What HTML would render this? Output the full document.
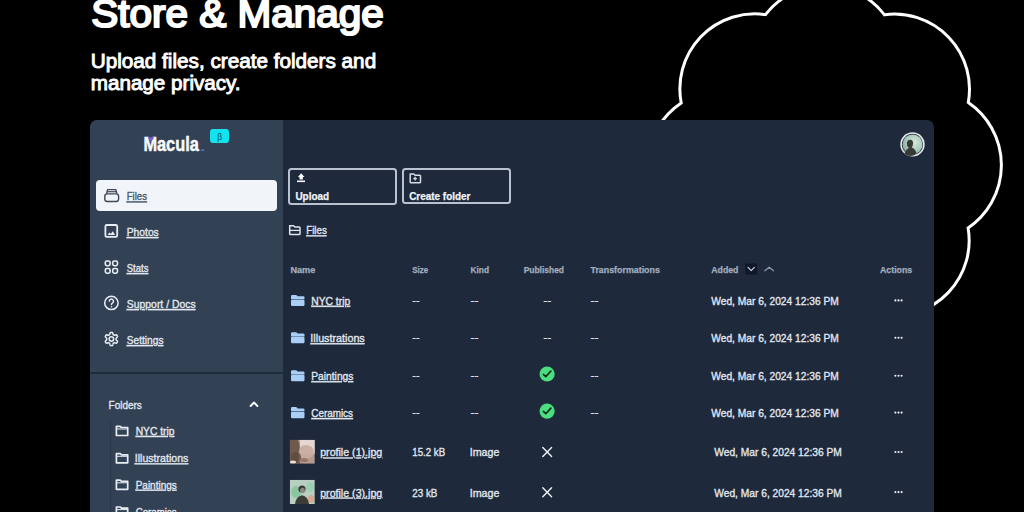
<!DOCTYPE html>
<html>
<head>
<meta charset="utf-8">
<style>
html,body{margin:0;padding:0;}
body{width:1024px;height:512px;background:#000;overflow:hidden;position:relative;font-family:"Liberation Sans",sans-serif;}
.abs{position:absolute;}
#cloud{position:absolute;left:0;top:0;}
#panel{position:absolute;left:90px;top:120px;width:844px;height:420px;border-radius:7px;background:#1e293b;overflow:hidden;}
#side{position:absolute;left:0;top:0;width:193px;height:420px;background:#334155;}
#divider{position:absolute;left:0;top:251.5px;width:193px;height:2px;background:#1f2a3b;}
#active{position:absolute;left:6px;top:60px;width:181px;height:31px;border-radius:4px;background:#f1f5f9;}
#beta{position:absolute;left:120.2px;top:9.3px;width:18.6px;height:13.8px;border-radius:3px;background:#12e3ef;}
.btn{position:absolute;border:2px solid #b9c3d0;border-radius:3.5px;box-sizing:border-box;}
#up{left:198px;top:47.8px;width:109.2px;height:37px;}
#cf{left:312.4px;top:48.2px;width:108.4px;height:36.3px;}
#tree{position:absolute;left:19.5px;top:300px;width:1px;height:120px;background:#2c394b;}
#overlay{position:absolute;left:0;top:0;}
text{font-family:"Liberation Sans",sans-serif;text-decoration-skip-ink:none;}
</style>
</head>
<body>
<svg id="cloud" width="1024" height="512" viewBox="0 0 1024 512">
<path d="M681.4 228 A75 75 0 0 1 681.2 102.9 A75 75 0 0 1 765.5 14.6 A75 75 0 0 1 884.5 14.8 A75 75 0 0 1 968.3 102.4 A76 76 0 0 1 968.1 228 A75 75 0 0 1 884.5 315" fill="none" stroke="#fff" stroke-width="3" stroke-linejoin="miter"/>
</svg>
<div id="panel">
  <div id="side">
    <div id="beta"></div>
    <div id="active"></div>
    <div id="divider"></div>
    <div id="tree"></div>
  </div>
  <div class="btn" id="up"></div>
  <div class="btn" id="cf"></div>
</div>
<svg id="overlay" width="1024" height="512" viewBox="0 0 1024 512">
<text x="91.26" y="27.10" font-size="39" font-weight="400" fill="#ffffff" stroke="#ffffff" stroke-width="2.1" textLength="292.59" lengthAdjust="spacingAndGlyphs">Store &amp; Manage</text>
<text x="90.76" y="68.10" font-size="20" font-weight="400" fill="#ffffff" stroke="#ffffff" stroke-width="0.9" textLength="285.40" lengthAdjust="spacingAndGlyphs">Upload files, create folders and</text>
<text x="90.77" y="90.20" font-size="20" font-weight="400" fill="#ffffff" stroke="#ffffff" stroke-width="0.9" textLength="149.84" lengthAdjust="spacingAndGlyphs">manage privacy.</text>
<text x="143.38" y="151.20" font-size="20" font-weight="700" fill="#f8fafc" stroke="#f8fafc" stroke-width="0.5" textLength="55.40" lengthAdjust="spacingAndGlyphs">Macula</text>
<text x="126.70" y="200.30" font-size="11.5" font-weight="400" fill="#475569" stroke="#475569" stroke-width="0.35" textLength="20.29" lengthAdjust="spacingAndGlyphs" text-decoration="underline">Files</text>
<text x="126.70" y="236.00" font-size="11.5" font-weight="400" fill="#e2e8f0" stroke="#e2e8f0" stroke-width="0.35" textLength="32.08" lengthAdjust="spacingAndGlyphs" text-decoration="underline">Photos</text>
<text x="126.80" y="272.00" font-size="11.5" font-weight="400" fill="#e2e8f0" stroke="#e2e8f0" stroke-width="0.35" textLength="21.59" lengthAdjust="spacingAndGlyphs" text-decoration="underline">Stats</text>
<text x="126.80" y="308.00" font-size="11.5" font-weight="400" fill="#e2e8f0" stroke="#e2e8f0" stroke-width="0.35" textLength="68.87" lengthAdjust="spacingAndGlyphs" text-decoration="underline">Support / Docs</text>
<text x="126.80" y="344.00" font-size="11.5" font-weight="400" fill="#e2e8f0" stroke="#e2e8f0" stroke-width="0.35" textLength="36.68" lengthAdjust="spacingAndGlyphs" text-decoration="underline">Settings</text>
<text x="108.60" y="408.60" font-size="11.5" font-weight="400" fill="#e2e8f0" stroke="#e2e8f0" stroke-width="0.35" textLength="33.18" lengthAdjust="spacingAndGlyphs">Folders</text>
<text x="135.70" y="434.90" font-size="11.5" font-weight="400" fill="#e2e8f0" stroke="#e2e8f0" stroke-width="0.35" textLength="38.85" lengthAdjust="spacingAndGlyphs" text-decoration="underline">NYC trip</text>
<text x="134.78" y="462.20" font-size="11.5" font-weight="400" fill="#e2e8f0" stroke="#e2e8f0" stroke-width="0.35" textLength="53.59" lengthAdjust="spacingAndGlyphs" text-decoration="underline">Illustrations</text>
<text x="135.70" y="488.70" font-size="11.5" font-weight="400" fill="#e2e8f0" stroke="#e2e8f0" stroke-width="0.35" textLength="41.08" lengthAdjust="spacingAndGlyphs" text-decoration="underline">Paintings</text>
<text x="135.70" y="515.50" font-size="11.5" font-weight="400" fill="#e2e8f0" stroke="#e2e8f0" stroke-width="0.35" textLength="40.79" lengthAdjust="spacingAndGlyphs" text-decoration="underline">Ceramics</text>
<text x="295.40" y="199.80" font-size="11.5" font-weight="700" fill="#f1f5f9" stroke="#f1f5f9" stroke-width="0.25" textLength="33.72" lengthAdjust="spacingAndGlyphs">Upload</text>
<text x="409.20" y="199.60" font-size="11.5" font-weight="700" fill="#f1f5f9" stroke="#f1f5f9" stroke-width="0.25" textLength="61.25" lengthAdjust="spacingAndGlyphs">Create folder</text>
<text x="306.20" y="234.20" font-size="11.5" font-weight="400" fill="#e2e8f0" stroke="#e2e8f0" stroke-width="0.35" textLength="20.59" lengthAdjust="spacingAndGlyphs" text-decoration="underline">Files</text>
<text x="290.40" y="273.00" font-size="9.3" font-weight="700" fill="#a3aebe" stroke="#a3aebe" stroke-width="0.25" textLength="24.97" lengthAdjust="spacingAndGlyphs">Name</text>
<text x="412.30" y="273.00" font-size="9.3" font-weight="700" fill="#a3aebe" stroke="#a3aebe" stroke-width="0.25" textLength="15.85" lengthAdjust="spacingAndGlyphs">Size</text>
<text x="470.50" y="273.00" font-size="9.3" font-weight="700" fill="#a3aebe" stroke="#a3aebe" stroke-width="0.25" textLength="18.51" lengthAdjust="spacingAndGlyphs">Kind</text>
<text x="523.70" y="273.00" font-size="9.3" font-weight="700" fill="#a3aebe" stroke="#a3aebe" stroke-width="0.25" textLength="40.31" lengthAdjust="spacingAndGlyphs">Published</text>
<text x="590.50" y="273.00" font-size="9.3" font-weight="700" fill="#a3aebe" stroke="#a3aebe" stroke-width="0.25" textLength="69.36" lengthAdjust="spacingAndGlyphs">Transformations</text>
<text x="711.25" y="273.00" font-size="9.3" font-weight="700" fill="#a3aebe" stroke="#a3aebe" stroke-width="0.25" textLength="27.20" lengthAdjust="spacingAndGlyphs">Added</text>
<text x="880.00" y="273.00" font-size="9.3" font-weight="700" fill="#a3aebe" stroke="#a3aebe" stroke-width="0.25" textLength="32.16" lengthAdjust="spacingAndGlyphs">Actions</text>
<text x="311.30" y="304.80" font-size="11.5" font-weight="400" fill="#e2e8f0" stroke="#e2e8f0" stroke-width="0.35" textLength="38.85" lengthAdjust="spacingAndGlyphs" text-decoration="underline">NYC trip</text>
<text x="412.30" y="303.80" font-size="11.5" font-weight="400" fill="#e2e8f0" stroke="#e2e8f0" stroke-width="0.15" textLength="7.24" lengthAdjust="spacingAndGlyphs">--</text>
<text x="470.50" y="303.80" font-size="11.5" font-weight="400" fill="#e2e8f0" stroke="#e2e8f0" stroke-width="0.15" textLength="8.02" lengthAdjust="spacingAndGlyphs">--</text>
<text x="590.50" y="303.80" font-size="11.5" font-weight="400" fill="#e2e8f0" stroke="#e2e8f0" stroke-width="0.15" textLength="8.02" lengthAdjust="spacingAndGlyphs">--</text>
<text x="711.25" y="304.80" font-size="11.5" font-weight="400" fill="#e2e8f0" stroke="#e2e8f0" stroke-width="0.35" textLength="127.51" lengthAdjust="spacingAndGlyphs">Wed, Mar 6, 2024 12:36 PM</text>
<text x="310.36" y="342.10" font-size="11.5" font-weight="400" fill="#e2e8f0" stroke="#e2e8f0" stroke-width="0.35" textLength="54.40" lengthAdjust="spacingAndGlyphs" text-decoration="underline">Illustrations</text>
<text x="412.30" y="341.10" font-size="11.5" font-weight="400" fill="#e2e8f0" stroke="#e2e8f0" stroke-width="0.15" textLength="7.24" lengthAdjust="spacingAndGlyphs">--</text>
<text x="470.50" y="341.10" font-size="11.5" font-weight="400" fill="#e2e8f0" stroke="#e2e8f0" stroke-width="0.15" textLength="8.02" lengthAdjust="spacingAndGlyphs">--</text>
<text x="590.50" y="341.10" font-size="11.5" font-weight="400" fill="#e2e8f0" stroke="#e2e8f0" stroke-width="0.15" textLength="8.02" lengthAdjust="spacingAndGlyphs">--</text>
<text x="711.25" y="342.10" font-size="11.5" font-weight="400" fill="#e2e8f0" stroke="#e2e8f0" stroke-width="0.35" textLength="127.51" lengthAdjust="spacingAndGlyphs">Wed, Mar 6, 2024 12:36 PM</text>
<text x="311.30" y="380.10" font-size="11.5" font-weight="400" fill="#e2e8f0" stroke="#e2e8f0" stroke-width="0.35" textLength="42.08" lengthAdjust="spacingAndGlyphs" text-decoration="underline">Paintings</text>
<text x="412.30" y="379.10" font-size="11.5" font-weight="400" fill="#e2e8f0" stroke="#e2e8f0" stroke-width="0.15" textLength="7.24" lengthAdjust="spacingAndGlyphs">--</text>
<text x="470.50" y="379.10" font-size="11.5" font-weight="400" fill="#e2e8f0" stroke="#e2e8f0" stroke-width="0.15" textLength="8.02" lengthAdjust="spacingAndGlyphs">--</text>
<text x="590.50" y="379.10" font-size="11.5" font-weight="400" fill="#e2e8f0" stroke="#e2e8f0" stroke-width="0.15" textLength="8.02" lengthAdjust="spacingAndGlyphs">--</text>
<text x="711.25" y="380.10" font-size="11.5" font-weight="400" fill="#e2e8f0" stroke="#e2e8f0" stroke-width="0.35" textLength="127.51" lengthAdjust="spacingAndGlyphs">Wed, Mar 6, 2024 12:36 PM</text>
<text x="311.30" y="417.00" font-size="11.5" font-weight="400" fill="#e2e8f0" stroke="#e2e8f0" stroke-width="0.35" textLength="41.69" lengthAdjust="spacingAndGlyphs" text-decoration="underline">Ceramics</text>
<text x="412.30" y="416.00" font-size="11.5" font-weight="400" fill="#e2e8f0" stroke="#e2e8f0" stroke-width="0.15" textLength="7.24" lengthAdjust="spacingAndGlyphs">--</text>
<text x="470.50" y="416.00" font-size="11.5" font-weight="400" fill="#e2e8f0" stroke="#e2e8f0" stroke-width="0.15" textLength="8.02" lengthAdjust="spacingAndGlyphs">--</text>
<text x="590.50" y="416.00" font-size="11.5" font-weight="400" fill="#e2e8f0" stroke="#e2e8f0" stroke-width="0.15" textLength="8.02" lengthAdjust="spacingAndGlyphs">--</text>
<text x="711.25" y="417.00" font-size="11.5" font-weight="400" fill="#e2e8f0" stroke="#e2e8f0" stroke-width="0.35" textLength="127.51" lengthAdjust="spacingAndGlyphs">Wed, Mar 6, 2024 12:36 PM</text>
<text x="543.20" y="303.80" font-size="11.5" font-weight="400" fill="#e2e8f0" stroke="#e2e8f0" stroke-width="0.15" textLength="8.02" lengthAdjust="spacingAndGlyphs">--</text>
<text x="543.20" y="341.10" font-size="11.5" font-weight="400" fill="#e2e8f0" stroke="#e2e8f0" stroke-width="0.15" textLength="8.02" lengthAdjust="spacingAndGlyphs">--</text>
<text x="320.20" y="456.40" font-size="11.5" font-weight="400" fill="#e2e8f0" stroke="#e2e8f0" stroke-width="0.35" textLength="62.07" lengthAdjust="spacingAndGlyphs" text-decoration="underline">profile (1).jpg</text>
<text x="412.30" y="456.40" font-size="11.5" font-weight="400" fill="#e2e8f0" stroke="#e2e8f0" stroke-width="0.35" textLength="32.82" lengthAdjust="spacingAndGlyphs">15.2 kB</text>
<text x="469.67" y="456.40" font-size="11.5" font-weight="400" fill="#e2e8f0" stroke="#e2e8f0" stroke-width="0.35" textLength="29.70" lengthAdjust="spacingAndGlyphs">Image</text>
<text x="714.30" y="456.40" font-size="11.5" font-weight="400" fill="#e2e8f0" stroke="#e2e8f0" stroke-width="0.35" textLength="127.51" lengthAdjust="spacingAndGlyphs">Wed, Mar 6, 2024 12:36 PM</text>
<text x="320.20" y="496.50" font-size="11.5" font-weight="400" fill="#e2e8f0" stroke="#e2e8f0" stroke-width="0.35" textLength="62.07" lengthAdjust="spacingAndGlyphs" text-decoration="underline">profile (3).jpg</text>
<text x="412.30" y="496.50" font-size="11.5" font-weight="400" fill="#e2e8f0" stroke="#e2e8f0" stroke-width="0.35" textLength="25.12" lengthAdjust="spacingAndGlyphs">23 kB</text>
<text x="469.67" y="496.50" font-size="11.5" font-weight="400" fill="#e2e8f0" stroke="#e2e8f0" stroke-width="0.35" textLength="29.70" lengthAdjust="spacingAndGlyphs">Image</text>
<text x="714.30" y="496.50" font-size="11.5" font-weight="400" fill="#e2e8f0" stroke="#e2e8f0" stroke-width="0.35" textLength="127.51" lengthAdjust="spacingAndGlyphs">Wed, Mar 6, 2024 12:36 PM</text>
<defs>
<linearGradient id="th1" x1="0" y1="0" x2="1" y2="0.3"><stop offset="0" stop-color="#6e5a4e"/><stop offset="0.45" stop-color="#8f7566"/><stop offset="0.75" stop-color="#c9aaa0"/><stop offset="1" stop-color="#e3d6d0"/></linearGradient>
<radialGradient id="th2" cx="0.45" cy="0.6" r="0.7"><stop offset="0" stop-color="#3e3c3a"/><stop offset="0.45" stop-color="#5b6356"/><stop offset="0.7" stop-color="#9fc4a6"/><stop offset="1" stop-color="#d4dcd6"/></radialGradient>
<radialGradient id="av" cx="0.6" cy="0.4" r="0.7"><stop offset="0" stop-color="#d6e6dc"/><stop offset="0.6" stop-color="#a9c9b9"/><stop offset="1" stop-color="#7c9a8c"/></radialGradient>
</defs>
<text x="219.6" y="139.8" font-size="8.5" fill="#0d4f5a" text-anchor="middle" font-family="Liberation Sans">β</text>
<path d="M148.1 136.3 L150.9 137.6 L153.8 136.3 L153.6 138.6 L150.9 141.8 L148.3 138.6 Z" fill="#6b62d6"/>
<rect x="200.8" y="149.5" width="3.4" height="1.4" fill="#5b6fd6"/>
<circle cx="912.5" cy="144.4" r="12.2" fill="#e3e9ef"/>
<circle cx="912.5" cy="144.4" r="10.6" fill="#27303a"/>
<circle cx="912.5" cy="144.4" r="10.0" fill="url(#av)"/>
<path d="M904.5 153.5 q1.5-4.5 4.5-5.5 q-2.5-1.5-2.2-4.8 q0.6-3.6 3.8-3.4 q3 0.6 2.4 4.4 q-0.4 2.3-1.4 3.3 q3.5 1.2 5 6 q-3 2.6-6.5 2.6 q-3.5 0-5.6-2.6 z" fill="#363b36"/>
<rect x="104.8" y="193.9" width="13.8" height="7.6" rx="2.4" fill="none" stroke="#3d4857" stroke-width="1.4"/>
<path d="M106.6 193.6 L107.6 189.6 H115.8 L116.9 193.6" fill="none" stroke="#3d4857" stroke-width="1.4" stroke-linejoin="round"/>
<path d="M107.2 191.7 H116.2" stroke="#3d4857" stroke-width="1.2"/>
<rect x="105.4" y="225" width="11.8" height="11.8" rx="1.4" fill="none" stroke="#e8edf3" stroke-width="1.8"/>
<path d="M107.6 235 L109.3 232.4 L110.8 233.8 L112.8 231.3 L115.1 235 Z" fill="#e8edf3"/>
<rect x="105.3" y="261" width="4.8" height="4.7" rx="1.6" fill="none" stroke="#e8edf3" stroke-width="1.6"/>
<rect x="112.7" y="261" width="4.8" height="4.7" rx="1.6" fill="none" stroke="#e8edf3" stroke-width="1.6"/>
<rect x="105.3" y="268.5" width="4.8" height="4.7" rx="1.6" fill="none" stroke="#e8edf3" stroke-width="1.6"/>
<rect x="112.7" y="268.5" width="4.8" height="4.7" rx="1.6" fill="none" stroke="#e8edf3" stroke-width="1.6"/>
<circle cx="111.4" cy="302.9" r="6.7" fill="none" stroke="#e8edf3" stroke-width="1.5"/>
<path d="M109.3 301.1 a2.1 2.1 0 1 1 3.3 1.8 c-0.8 0.5-1.1 0.9-1.1 1.7" fill="none" stroke="#e8edf3" stroke-width="1.4" stroke-linecap="round"/>
<circle cx="111.5" cy="306.8" r="0.8" fill="#e8edf3"/>
<path d="M116.10 339.00 L116.10 339.12 L116.09 339.25 L116.09 339.37 L116.07 339.49 L116.06 339.61 L116.04 339.74 L116.23 339.90 L116.44 340.07 L116.65 340.26 L116.86 340.46 L117.06 340.68 L117.25 340.90 L117.42 341.13 L117.56 341.36 L117.50 341.53 L117.43 341.68 L117.36 341.84 L117.28 342.00 L117.20 342.15 L117.12 342.30 L117.03 342.45 L116.94 342.59 L116.84 342.74 L116.74 342.88 L116.64 343.02 L116.53 343.15 L116.25 343.15 L115.97 343.11 L115.68 343.06 L115.40 343.00 L115.12 342.92 L114.85 342.83 L114.59 342.74 L114.36 342.65 L114.26 342.73 L114.16 342.80 L114.06 342.87 L113.96 342.94 L113.86 343.01 L113.75 343.07 L113.64 343.13 L113.53 343.19 L113.42 343.24 L113.31 343.29 L113.20 343.34 L113.08 343.39 L113.04 343.63 L112.99 343.90 L112.93 344.18 L112.86 344.46 L112.78 344.74 L112.68 345.01 L112.56 345.28 L112.43 345.52 L112.26 345.54 L112.09 345.56 L111.92 345.58 L111.75 345.59 L111.57 345.60 L111.40 345.60 L111.23 345.60 L111.05 345.59 L110.88 345.58 L110.71 345.56 L110.54 345.54 L110.37 345.52 L110.24 345.28 L110.12 345.01 L110.02 344.74 L109.94 344.46 L109.87 344.18 L109.81 343.90 L109.76 343.63 L109.72 343.39 L109.60 343.34 L109.49 343.29 L109.38 343.24 L109.27 343.19 L109.16 343.13 L109.05 343.07 L108.94 343.01 L108.84 342.94 L108.74 342.87 L108.64 342.80 L108.54 342.73 L108.44 342.65 L108.21 342.74 L107.95 342.83 L107.68 342.92 L107.40 343.00 L107.12 343.06 L106.83 343.11 L106.55 343.15 L106.27 343.15 L106.16 343.02 L106.06 342.88 L105.96 342.74 L105.86 342.59 L105.77 342.45 L105.68 342.30 L105.60 342.15 L105.52 342.00 L105.44 341.84 L105.37 341.68 L105.30 341.53 L105.24 341.36 L105.38 341.13 L105.55 340.90 L105.74 340.68 L105.94 340.46 L106.15 340.26 L106.36 340.07 L106.57 339.90 L106.76 339.74 L106.74 339.61 L106.73 339.49 L106.71 339.37 L106.71 339.25 L106.70 339.12 L106.70 339.00 L106.70 338.88 L106.71 338.75 L106.71 338.63 L106.73 338.51 L106.74 338.39 L106.76 338.26 L106.57 338.10 L106.36 337.93 L106.15 337.74 L105.94 337.54 L105.74 337.32 L105.55 337.10 L105.38 336.87 L105.24 336.64 L105.30 336.47 L105.37 336.32 L105.44 336.16 L105.52 336.00 L105.60 335.85 L105.68 335.70 L105.77 335.55 L105.86 335.41 L105.96 335.26 L106.06 335.12 L106.16 334.98 L106.27 334.85 L106.55 334.85 L106.83 334.89 L107.12 334.94 L107.40 335.00 L107.68 335.08 L107.95 335.17 L108.21 335.26 L108.44 335.35 L108.54 335.27 L108.64 335.20 L108.74 335.13 L108.84 335.06 L108.94 334.99 L109.05 334.93 L109.16 334.87 L109.27 334.81 L109.38 334.76 L109.49 334.71 L109.60 334.66 L109.72 334.61 L109.76 334.37 L109.81 334.10 L109.87 333.82 L109.94 333.54 L110.02 333.26 L110.12 332.99 L110.24 332.72 L110.37 332.48 L110.54 332.46 L110.71 332.44 L110.88 332.42 L111.05 332.41 L111.23 332.40 L111.40 332.40 L111.57 332.40 L111.75 332.41 L111.92 332.42 L112.09 332.44 L112.26 332.46 L112.43 332.48 L112.56 332.72 L112.68 332.99 L112.78 333.26 L112.86 333.54 L112.93 333.82 L112.99 334.10 L113.04 334.37 L113.08 334.61 L113.20 334.66 L113.31 334.71 L113.42 334.76 L113.53 334.81 L113.64 334.87 L113.75 334.93 L113.86 334.99 L113.96 335.06 L114.06 335.13 L114.16 335.20 L114.26 335.27 L114.36 335.35 L114.59 335.26 L114.85 335.17 L115.12 335.08 L115.40 335.00 L115.68 334.94 L115.97 334.89 L116.25 334.85 L116.53 334.85 L116.64 334.98 L116.74 335.12 L116.84 335.26 L116.94 335.41 L117.03 335.55 L117.12 335.70 L117.20 335.85 L117.28 336.00 L117.36 336.16 L117.43 336.32 L117.50 336.47 L117.56 336.64 L117.42 336.87 L117.25 337.10 L117.06 337.32 L116.86 337.54 L116.65 337.74 L116.44 337.93 L116.23 338.10 L116.04 338.26 L116.06 338.39 L116.07 338.51 L116.09 338.63 L116.09 338.75 L116.10 338.88 Z" fill="none" stroke="#e8edf3" stroke-width="1.5" stroke-linejoin="round"/>
<circle cx="111.4" cy="339.0" r="2.2" fill="none" stroke="#e8edf3" stroke-width="1.5"/>
<path d="M250.6 406 L254 402.5 L257.4 406" fill="none" stroke="#f8fafc" stroke-width="1.9" stroke-linecap="round" stroke-linejoin="round"/>
<path d="M116.4 426.4 h3.8 l1.3 1.1 h6.2 v8.0 h-11.3 z" fill="none" stroke="#e8edf3" stroke-width="1.7" stroke-linejoin="round"/>
<path d="M116.4 429.0 h11.3" stroke="#e8edf3" stroke-width="1.0"/>
<path d="M116.4 453.7 h3.8 l1.3 1.1 h6.2 v8.0 h-11.3 z" fill="none" stroke="#e8edf3" stroke-width="1.7" stroke-linejoin="round"/>
<path d="M116.4 456.3 h11.3" stroke="#e8edf3" stroke-width="1.0"/>
<path d="M116.4 480.2 h3.8 l1.3 1.1 h6.2 v8.0 h-11.3 z" fill="none" stroke="#e8edf3" stroke-width="1.7" stroke-linejoin="round"/>
<path d="M116.4 482.8 h11.3" stroke="#e8edf3" stroke-width="1.0"/>
<path d="M116.4 507.0 h3.8 l1.3 1.1 h6.2 v8.0 h-11.3 z" fill="none" stroke="#e8edf3" stroke-width="1.7" stroke-linejoin="round"/>
<path d="M116.4 509.6 h11.3" stroke="#e8edf3" stroke-width="1.0"/>
<path d="M301.2 173.3 L304.5 177 L302.9 177 L302.9 179.5 L299.5 179.5 L299.5 177 L297.9 177 Z" fill="#f8fafc"/>
<rect x="297" y="180.5" width="8" height="1.6" fill="#f8fafc"/>
<path d="M410.2 174 h3.6 l1.3 1.2 h4.6 q0.8 0 0.8 0.8 v5.9 q0 0.8-0.8 0.8 h-8.7 q-0.8 0-0.8-0.8 z" fill="none" stroke="#d5dce6" stroke-width="1.5" stroke-linejoin="round"/>
<path d="M413.3 178.6 h3.6 M415.1 176.8 v3.6" stroke="#d5dce6" stroke-width="1.3"/>
<path d="M289.7 225.8 h3.9 l1.3 1.2 h4.3 q0.8 0 0.8 0.8 v5.9 q0 0.8-0.8 0.8 h-8.7 q-0.8 0-0.8-0.8 z" fill="none" stroke="#dfe5ec" stroke-width="1.5" stroke-linejoin="round"/>
<path d="M290 230.4 h9.7" stroke="#dfe5ec" stroke-width="1.3"/>
<path d="M291 296.1 q0-1.2 1.2-1.2 h4 l1.5 1.4 h5.6 q1.2 0 1.2 1.2 v1.6 h-13.5 z" fill="#a9cff7"/>
<rect x="291" y="299.5" width="13.5" height="6.5" rx="1.3" fill="#a9cff7"/>
<path d="M291 333.4 q0-1.2 1.2-1.2 h4 l1.5 1.4 h5.6 q1.2 0 1.2 1.2 v1.6 h-13.5 z" fill="#a9cff7"/>
<rect x="291" y="336.8" width="13.5" height="6.5" rx="1.3" fill="#a9cff7"/>
<path d="M291 371.4 q0-1.2 1.2-1.2 h4 l1.5 1.4 h5.6 q1.2 0 1.2 1.2 v1.6 h-13.5 z" fill="#a9cff7"/>
<rect x="291" y="374.8" width="13.5" height="6.5" rx="1.3" fill="#a9cff7"/>
<path d="M291 408.3 q0-1.2 1.2-1.2 h4 l1.5 1.4 h5.6 q1.2 0 1.2 1.2 v1.6 h-13.5 z" fill="#a9cff7"/>
<rect x="291" y="411.7" width="13.5" height="6.5" rx="1.3" fill="#a9cff7"/>
<circle cx="547.1" cy="374.0" r="7.6" fill="#4ade80"/>
<path d="M543.4 374.3 L545.8 376.6 L550.9 371.0" fill="none" stroke="#0d2a17" stroke-width="1.6" stroke-linecap="round" stroke-linejoin="round"/>
<circle cx="547.1" cy="411.1" r="7.6" fill="#4ade80"/>
<path d="M543.4 411.4 L545.8 413.7 L550.9 408.1" fill="none" stroke="#0d2a17" stroke-width="1.6" stroke-linecap="round" stroke-linejoin="round"/>
<path d="M542.8 447.6 L551.6 456.6 M551.6 447.6 L542.8 456.6" stroke="#eef2f6" stroke-width="1.4" stroke-linecap="round"/>
<path d="M542.8 487.8 L551.6 496.8 M551.6 487.8 L542.8 496.8" stroke="#eef2f6" stroke-width="1.4" stroke-linecap="round"/>
<rect x="745.2" y="263.6" width="11.8" height="10.9" rx="0.8" fill="#0f172a"/>
<path d="M748.1 267.4 L751.2 270.6 L754.3 267.4" fill="none" stroke="#c3ccd8" stroke-width="1.3" stroke-linecap="round" stroke-linejoin="round"/>
<path d="M764.8 270.7 L769.2 267.2 L773.6 270.7" fill="none" stroke="#8d99aa" stroke-width="1.3" stroke-linecap="round" stroke-linejoin="round"/>
<circle cx="895.4" cy="300.4" r="1.05" fill="#f1f5f9"/>
<circle cx="898.5" cy="300.4" r="1.05" fill="#f1f5f9"/>
<circle cx="901.6" cy="300.4" r="1.05" fill="#f1f5f9"/>
<circle cx="895.4" cy="337.7" r="1.05" fill="#f1f5f9"/>
<circle cx="898.5" cy="337.7" r="1.05" fill="#f1f5f9"/>
<circle cx="901.6" cy="337.7" r="1.05" fill="#f1f5f9"/>
<circle cx="895.4" cy="375.7" r="1.05" fill="#f1f5f9"/>
<circle cx="898.5" cy="375.7" r="1.05" fill="#f1f5f9"/>
<circle cx="901.6" cy="375.7" r="1.05" fill="#f1f5f9"/>
<circle cx="895.4" cy="412.6" r="1.05" fill="#f1f5f9"/>
<circle cx="898.5" cy="412.6" r="1.05" fill="#f1f5f9"/>
<circle cx="901.6" cy="412.6" r="1.05" fill="#f1f5f9"/>
<circle cx="895.4" cy="452.0" r="1.05" fill="#f1f5f9"/>
<circle cx="898.5" cy="452.0" r="1.05" fill="#f1f5f9"/>
<circle cx="901.6" cy="452.0" r="1.05" fill="#f1f5f9"/>
<circle cx="895.4" cy="492.1" r="1.05" fill="#f1f5f9"/>
<circle cx="898.5" cy="492.1" r="1.05" fill="#f1f5f9"/>
<circle cx="901.6" cy="492.1" r="1.05" fill="#f1f5f9"/>
<clipPath id="c1"><rect x="289.8" y="439.8" width="25" height="24"/></clipPath>
<clipPath id="c2"><rect x="289.8" y="479.8" width="25" height="24.3"/></clipPath>
<filter id="bl" x="-10%" y="-10%" width="120%" height="120%"><feGaussianBlur stdDeviation="0.7"/></filter>
<g clip-path="url(#c1)"><g filter="url(#bl)"><rect x="289.8" y="439.8" width="25" height="24" fill="#b59a8f"/><rect x="300" y="439.8" width="15" height="14" fill="#e4d6d1"/><ellipse cx="306" cy="452" rx="8" ry="7" fill="#c8aba0" opacity="0.9"/><path d="M289.8 439.8 h8 q3 6 1 12 q-2 6 2 12 h-11 z" fill="#6f5a4e"/><ellipse cx="296" cy="457" rx="5" ry="5" fill="#5e4a40" opacity="0.8"/><ellipse cx="293" cy="462" rx="3" ry="1.5" fill="#e9e2dc"/><ellipse cx="304" cy="460" rx="4" ry="2" fill="#8e6e62" opacity="0.8"/></g></g>
<g clip-path="url(#c2)"><g filter="url(#bl)"><rect x="289.8" y="479.8" width="25" height="24.3" fill="#b9cfc2"/><ellipse cx="296" cy="492" rx="5" ry="6" fill="#7fc493" opacity="0.8"/><ellipse cx="310" cy="487" rx="4" ry="5" fill="#8fd0a8" opacity="0.7"/><ellipse cx="311" cy="499" rx="3.5" ry="4" fill="#d9a590" opacity="0.9"/><circle cx="302" cy="489" r="3.6" fill="#3a3a38"/><ellipse cx="302.5" cy="490.5" rx="2.4" ry="2.8" fill="#8d8a84"/><path d="M295 504.2 q1-8 7-9 q6 1 7 9 z" fill="#3b3a37"/></g></g>
</svg>
</body>
</html>
